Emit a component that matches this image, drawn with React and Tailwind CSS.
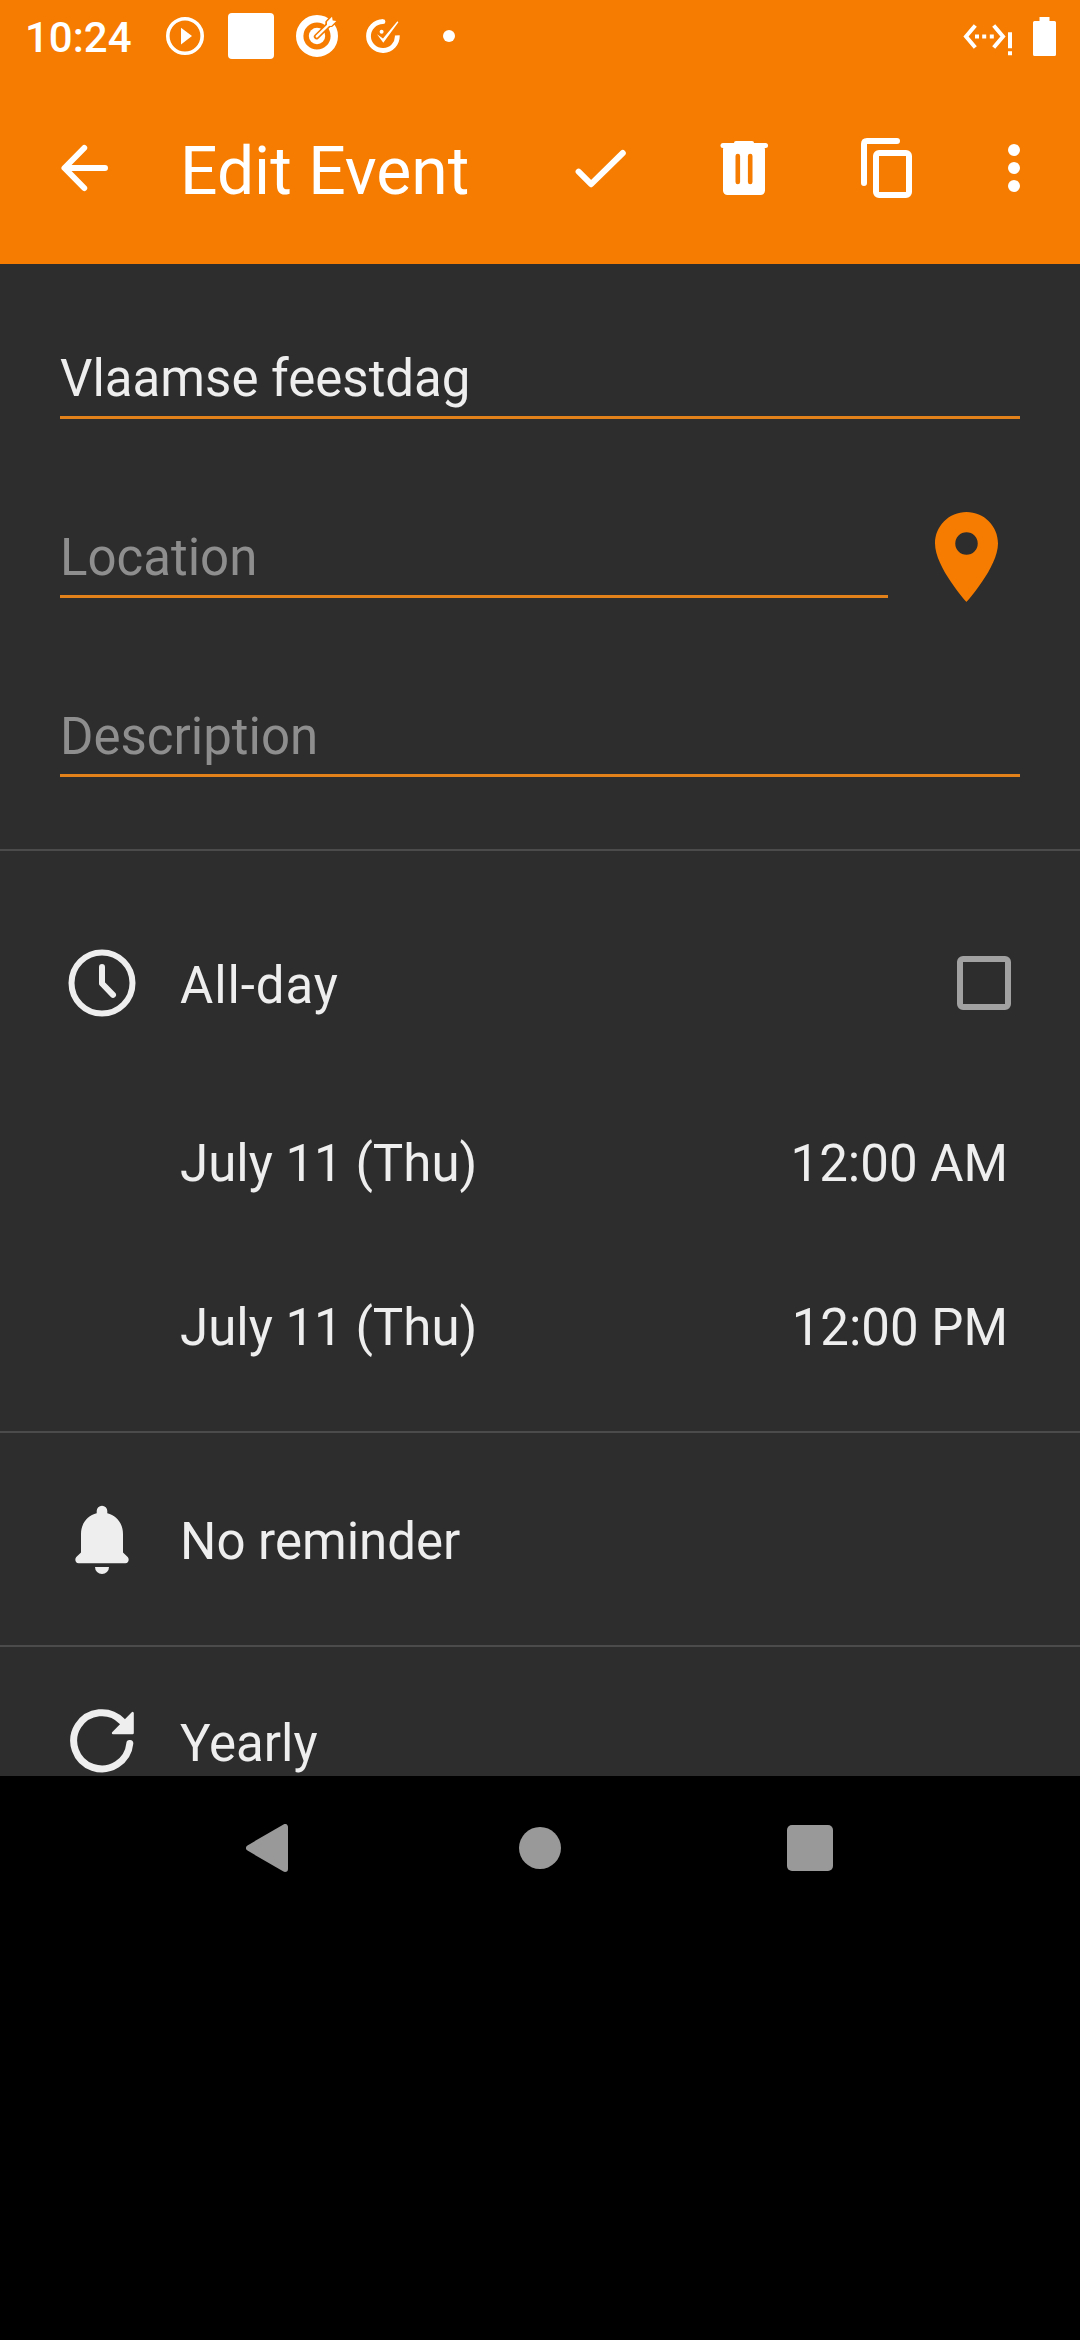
function StatusBar() {
  return (
    <div className="flex h-[72px] items-center justify-between pl-[25px] pr-[24px]">
      <div className="flex items-center">
        <span className="w-[141px] pt-[3px] text-[42px] font-medium leading-[50px]">10:24</span>
        <svg className="h-[38px] w-[38px]" viewBox="0 0 38 38">
          <circle cx="19" cy="19" r="17.2" fill="none" stroke="#fff" strokeWidth="3.6" />
          <path d="M15 10.8v16.6L26 19z" fill="#fff" />
        </svg>
        <span className="ml-[24px] h-[46px] w-[46px] rounded-[4px] bg-white" />
        <svg className="ml-[22px] h-[42px] w-[42px]" viewBox="0 0 42 42">
          <circle cx="21" cy="21" r="17.3" fill="none" stroke="#fff" strokeWidth="7.4" />
          <circle cx="21" cy="21" r="8.2" fill="#fff" />
          <path d="M20.500 21.700L36 6.500" stroke="#f57c00" strokeWidth="5.400" strokeLinecap="round" />
          <path d="M29.300 10.800V6.500L35 0h7v7l-6 5h-5z" fill="#f57c00" />
          <path d="M20.800 21.400L35 7.500" stroke="#fff" strokeWidth="2.400" strokeLinecap="round" />
          <path d="M31 10.500V6.800l5-5 .7 3.700 3.600.6-5 4.800z" fill="#fff" />
        </svg>
        <svg className="ml-[28px] h-[34px] w-[34px]" viewBox="0 0 34 34">
          <path d="M17 2.700A14.400 14.400 0 1 0 31.300 16.300" fill="none" stroke="#fff" strokeWidth="4.8" />
          <circle cx="17" cy="2.700" r="2.400" fill="#fff" />
          <circle cx="15.600" cy="12.700" r="2" fill="#fff" />
          <path d="M11 15.300l6 4.300L31.400 2.300l1 .9L17.300 23.700z" fill="#fff" />
        </svg>
        <span className="ml-[43px] h-[12px] w-[12px] rounded-full bg-white" />
      </div>
      <div className="flex items-center gap-[20px]">
        <svg className="mt-[7px] h-[32px] w-[50px]" viewBox="0 0 50 32">
          <path d="M12.300 1.500L3 12.500l9.300 11M30.700 1.500L40 12.500l-9.300 11" fill="none" stroke="#fff" strokeWidth="4" />
          <path d="M12 10.500h4v4h-4zM19.200 10.500h4v4h-4zM26.800 10.500h4v4h-4zM45 8.300h4v15.900h-4zM45 27.200h4v4h-4z" fill="#fff" />
        </svg>
        <svg className="h-[39px] w-[23px]" viewBox="0 0 23 39">
          <path d="M6.500 0h10v4H21.500q1.500 0 1.500 1.500v32q0 1.500-1.500 1.500h-20Q0 39 0 37.500v-32Q0 4 1.500 4h5z" fill="#fff" />
        </svg>
      </div>
    </div>
  );
}

function Toolbar() {
  return (
    <div className="flex h-[192px] items-center pl-[60px] pr-[30px]">
      <svg className="h-[48px] w-[48px] overflow-visible" viewBox="0 0 48 48" fill="none" stroke="#fff" strokeWidth="6" strokeLinecap="round" strokeLinejoin="round">
        <path d="M45 24H5M24.200 4L4.500 24l19.700 20" />
      </svg>
      <h1 className="ml-[72px] flex-1 pt-[7px] text-[66px] font-normal leading-[78px]">Edit Event</h1>
      <svg className="h-[72px] w-[72px]" viewBox="0 0 72 72" fill="none" stroke="#fff" strokeWidth="6" strokeLinecap="round" strokeLinejoin="round">
        <path d="M13.600 39.700l12.500 12.500L57.800 21" />
      </svg>
      <svg className="ml-[71px] h-[72px] w-[72px]" viewBox="0 0 72 72" fill="#fff">
        <rect x="12.500" y="11" width="47.500" height="5" rx="2.500" />
        <rect x="26" y="9" width="20" height="6" rx="2" />
        <rect x="15" y="13" width="42" height="50" rx="4.500" />
        <rect x="27.500" y="21.700" width="4.600" height="30.500" rx="2.300" fill="#f57c00" />
        <rect x="39.900" y="21.700" width="4.600" height="30.500" rx="2.300" fill="#f57c00" />
      </svg>
      <svg className="ml-[71px] h-[72px] w-[72px]" viewBox="0 0 72 72" fill="none" stroke="#fff" strokeWidth="6" strokeLinecap="round">
        <path d="M46 9H16q-3 0-3 3v39" />
        <rect x="25" y="21" width="33" height="42" rx="3" />
      </svg>
      <svg className="ml-[55px] h-[72px] w-[72px]" viewBox="0 0 72 72" fill="#fff">
        <circle cx="36" cy="18" r="6" />
        <circle cx="36" cy="36" r="6" />
        <circle cx="36" cy="54" r="6" />
      </svg>
    </div>
  );
}

function Field({ text, hint }) {
  return (
    <div className="h-[70px] flex-1 border-b-[3px] border-[#e28019] text-[51px] leading-[60px]">
      {hint ? <span className="text-[#8e8e8e]">{text}</span> : <span>{text}</span>}
    </div>
  );
}

function Divider() {
  return <div className="h-[2px] shrink-0 bg-[#4b4b4b]" />;
}

function ClockIcon() {
  return (
    <svg className="h-[68px] w-[68px]" viewBox="0 0 68 68" fill="none" stroke="#eee" strokeWidth="6" strokeLinecap="round" strokeLinejoin="round">
      <circle cx="34" cy="34" r="30.500" />
      <path d="M34 18v16.500l11 11.300" />
    </svg>
  );
}

function BellIcon() {
  return (
    <svg className="h-[69px] w-[54px]" viewBox="0 0 54 69" fill="#eee">
      <path d="M21.700 6a5.300 5.300 0 0 1 10.600 0v2.300C41.500 10.500 48 18.500 48 29v18.600l4.700 4.400c2 2.300.8 6.300-2.400 6.300H3.700c-3.200 0-4.400-4-2.400-6.300L6 47.600V29C6 18.500 12.500 10.500 21.700 8.300z" />
      <path d="M20 62h14a7 7 0 0 1-14 0z" />
    </svg>
  );
}

function RepeatIcon() {
  return (
    <svg className="h-[64px] w-[64px]" viewBox="0 0 64 64" fill="none" stroke="#eee">
      <path d="M59.800 34.500A28.100 28.100 0 1 1 52 12.200" strokeWidth="7" strokeLinecap="round" />
      <path d="M62.600 4v20H43z" fill="#eee" strokeWidth="2.400" strokeLinejoin="round" />
    </svg>
  );
}

function Row({ icon, label, children }) {
  return (
    <div className="flex h-full items-center pr-[69px] text-[51px] leading-[60px]">
      <div className="flex w-[180px] justify-center pl-[24px]">{icon}</div>
      <span className="flex-1 pt-[5px]">{label}</span>
      {children}
    </div>
  );
}

function DateRow({ date, time }) {
  return (
    <div className="flex h-[164px] items-center justify-between pl-[180px] pr-[72px] text-[51px] leading-[60px]">
      <span>{date}</span>
      <span>{time}</span>
    </div>
  );
}

function NavBar() {
  return (
    <div className="flex h-[144px] items-center pl-[246px]">
      <svg className="h-[48px] w-[42px]" viewBox="0 0 42 48">
        <path d="M39 3v42L3 24z" fill="#999" stroke="#999" strokeWidth="6" strokeLinejoin="round" />
      </svg>
      <span className="ml-[231px] h-[42px] w-[42px] rounded-full bg-[#999]" />
      <span className="ml-[226px] h-[46px] w-[46px] rounded-[5px] bg-[#999]" />
    </div>
  );
}

export default function App() {
  return (
    <div className="h-[2340px] w-[1080px] overflow-hidden bg-black font-[Roboto,sans-serif]">
      <header className="h-[264px] bg-[#f57c00] text-white">
        <StatusBar />
        <Toolbar />
      </header>
      <main className="flex h-[1512px] flex-col overflow-hidden bg-[#2d2d2d] text-[#eee]">
        <section className="flex h-[585px] shrink-0 flex-col gap-[109px] px-[60px] pt-[85px]">
          <div className="flex">
            <Field text="Vlaamse feestdag" />
          </div>
          <div className="flex h-[70px] items-start">
            <Field text="Location" hint />
            <svg className="-mt-[16px] ml-[47px] mr-[22px] h-[90px] w-[63px]" viewBox="5 2 14 20">
              <path fillRule="evenodd" d="M12 2C8.130 2 5 5.130 5 9c0 5.250 7 13 7 13s7-7.750 7-13c0-3.870-3.130-7-7-7zm0 9.500a2.500 2.500 0 0 1 0-5 2.500 2.500 0 0 1 0 5z" fill="#f57c00" />
            </svg>
          </div>
          <div className="flex">
            <Field text="Description" hint />
          </div>
        </section>
        <Divider />
        <section className="h-[580px] shrink-0 pt-[33px]">
          <div className="h-[198px] tracking-[0.9px]">
            <Row icon={<ClockIcon />} label="All-day">
              <span className="h-[54px] w-[54px] rounded-[6px] border-[6px] border-[#a1a1a1]" />
            </Row>
          </div>
          <DateRow date="July 11 (Thu)" time="12:00 AM" />
          <DateRow date="July 11 (Thu)" time="12:00 PM" />
        </section>
        <Divider />
        <section className="h-[212px] shrink-0">
          <Row icon={<BellIcon />} label="No reminder" />
        </section>
        <Divider />
        <section className="h-[188px] shrink-0">
          <Row icon={<RepeatIcon />} label="Yearly" />
        </section>
      </main>
      <NavBar />
    </div>
  );
}
